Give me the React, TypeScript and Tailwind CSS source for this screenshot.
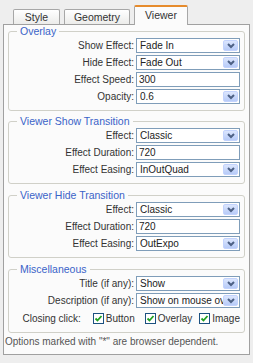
import React from "react";

const font = { fontFamily: '"Liberation Sans", Arial, sans-serif' };

function Arrow() {
  return (
    <span className="absolute right-[1px] top-[1px] bottom-[1px] w-[15px] rounded-[2px] bg-gradient-to-b from-[#dce6fd] to-[#b7cbf8] border border-[#c3d3fd] flex items-center justify-center">
      <svg width="8" height="6" viewBox="0 0 8 6">
        <path d="M1 1 L4 4 L7 1" stroke="#4d6185" strokeWidth="2" fill="none" />
      </svg>
    </span>
  );
}

function Select({ value }: { value: string }) {
  return (
    <div className="relative w-[104px] h-[15px] bg-white border border-[#7f9db9] overflow-hidden">
      <span className="absolute left-[3px] top-0 leading-[13px] whitespace-nowrap text-[#222]">{value}</span>
      <Arrow />
    </div>
  );
}

function Input({ value }: { value: string }) {
  return (
    <div className="w-[104px] h-[15px] bg-white border border-[#7f9db9] pl-[2px] leading-[13px] text-[#222]">
      {value}
    </div>
  );
}

function Row({ label, children }: { label: string; children: React.ReactNode }) {
  return (
    <div className="flex items-center justify-end pr-[4px] h-[15px]">
      <span className="mr-[2px] text-[#333]">{label}</span>
      {children}
    </div>
  );
}

function Group({ title, children, className }: { title: string; children: React.ReactNode; className?: string }) {
  return (
    <fieldset className={"border border-[#d0d0c8] rounded-[3px] pb-[6px] " + (className ?? "")}>
      <legend className="ml-[8px] px-[3px] leading-[11px] text-[10.5px] text-[#3a63c8]">{title}</legend>
      <div className="mt-[1px] flex flex-col gap-[2px]">{children}</div>
    </fieldset>
  );
}

function Check({ label }: { label: string }) {
  return (
    <span className="flex items-center gap-[2px]">
      <span className="w-[11px] h-[11px] border border-[#1c5180] bg-white flex items-center justify-center">
        <svg width="9" height="9" viewBox="0 0 9 9">
          <path d="M1.5 4.5 L3.5 6.5 L7.5 2" stroke="#21a121" strokeWidth="1.8" fill="none" />
        </svg>
      </span>
      <span className="text-[#333]">{label}</span>
    </span>
  );
}

export default function App() {
  return (
    <div className="w-[253px] h-[363px] bg-[#eeeeee] text-[10px]" style={font}>
      <div className="flex items-end h-[24px] pl-[13px] gap-[4px] text-[10.5px]">
        <div className="w-[47px] h-[15px] border border-b-0 border-[#a7a7a7] rounded-t-[2px] bg-gradient-to-b from-white to-[#ececea] text-center leading-[14px] text-[#333]">
          Style
        </div>
        <div className="w-[66px] h-[15px] border border-b-0 border-[#a7a7a7] rounded-t-[2px] bg-gradient-to-b from-white to-[#ececea] text-center leading-[14px] text-[#333]">
          Geometry
        </div>
        <div className="relative z-10 -mb-px w-[54px] h-[20px] border border-b-0 border-[#a7a7a7] border-t-[2px] border-t-[#e68b2c] rounded-t-[2px] bg-[#fbfbfb] text-center leading-[16px] text-[#333]">
          Viewer
        </div>
      </div>
      <div className="mx-[3px] h-[331px] border border-[#a0a0a0] bg-[#fbfbfb] px-[4px] pt-[1px]">
        <Group title="Overlay">
          <Row label="Show Effect:"><Select value="Fade In" /></Row>
          <Row label="Hide Effect:"><Select value="Fade Out" /></Row>
          <Row label="Effect Speed:"><Input value="300" /></Row>
          <Row label="Opacity:"><Select value="0.6" /></Row>
        </Group>
        <Group title="Viewer Show Transition" className="mt-[5px]">
          <Row label="Effect:"><Select value="Classic" /></Row>
          <Row label="Effect Duration:"><Input value="720" /></Row>
          <Row label="Effect Easing:"><Select value="InOutQuad" /></Row>
        </Group>
        <Group title="Viewer Hide Transition" className="mt-[6px]">
          <Row label="Effect:"><Select value="Classic" /></Row>
          <Row label="Effect Duration:"><Input value="720" /></Row>
          <Row label="Effect Easing:"><Select value="OutExpo" /></Row>
        </Group>
        <Group title="Miscellaneous" className="mt-[6px]">
          <Row label="Title (if any):"><Select value="Show" /></Row>
          <Row label="Description (if any):"><Select value="Show on mouse over" /></Row>
          <div className="flex items-center justify-end pr-[4px] h-[15px] mt-[1px]">
            <span className="mr-[12px] text-[#333]">Closing click:</span>
            <span className="mr-[10px]"><Check label="Button" /></span>
            <span className="mr-[7px]"><Check label="Overlay" /></span>
            <Check label="Image" />
          </div>
        </Group>
        <div className="mt-[3px] -ml-[3px] text-[#555] leading-[12px]">Options marked with "*" are browser dependent.</div>
      </div>
    </div>
  );
}
